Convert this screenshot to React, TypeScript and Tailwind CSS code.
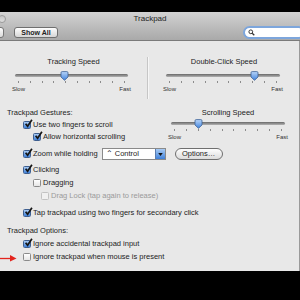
import React from "react";

const ticks = [0, 1, 2, 3, 4, 5, 6, 7, 8, 9];

function Thumb() {
  return (
    <svg viewBox="0 0 9 10" className="w-[9px] h-[10px]">
      <defs>
        <linearGradient id="tg" x1="0" y1="0" x2="0" y2="1">
          <stop offset="0" stopColor="#b9d6fa" />
          <stop offset="1" stopColor="#3f82dc" />
        </linearGradient>
      </defs>
      <path d="M1 1.8 Q1 0.6 2.2 0.6 H6.8 Q8 0.6 8 1.8 V6 L4.5 9.3 L1 6 Z" fill="url(#tg)" stroke="#3b5f94" strokeWidth="0.8" />
    </svg>
  );
}

function Slider({ pos, className }: { pos: number; className: string }) {
  return (
    <div className={"flex flex-col " + className}>
      <div className="relative h-[10px] flex items-center">
        <div className="w-full h-[3px] rounded-full bg-linear-to-b from-[#686868] to-[#b4b4b4]" />
        <div className="absolute top-[1px] -ml-[4.5px]" style={{ left: `${pos * 100}%` }}>
          <Thumb />
        </div>
      </div>
      <div className="h-[5px] flex justify-between px-[3px] pt-[1px]">
        {ticks.map(t => (
          <span key={t} className="w-px h-[2px] bg-[#8c8c8c]" />
        ))}
      </div>
      <div className="h-[8px] flex justify-between -mx-[3px] text-[6px] leading-[8px] text-[#333]">
        <span>Slow</span>
        <span>Fast</span>
      </div>
    </div>
  );
}

function Check({ checked, disabled }: { checked?: boolean; disabled?: boolean }) {
  const box = checked
    ? "bg-linear-to-b from-[#a8cbf4] to-[#3f80d8] border-[#3e5f90]"
    : disabled
    ? "bg-[#f0f0f0] border-[#c2c2c2]"
    : "bg-linear-to-b from-white to-[#e6e6e6] border-[#8a8a8a]";
  return (
    <span className={"relative w-[8px] h-[8px] rounded-[1.5px] border shrink-0 " + box}>
      {checked && (
        <svg viewBox="0 0 10 10" className="absolute -top-[3px] left-0 w-[9px] h-[9px]">
          <path d="M1.8 5.2 L4 8 L8.8 0.8" stroke="#151515" strokeWidth="1.9" fill="none" />
        </svg>
      )}
    </span>
  );
}

function Row({ label, checked, disabled, className }: { label: string; checked?: boolean; disabled?: boolean; className: string }) {
  return (
    <div className={"flex items-center h-[12px] gap-[2px] " + className}>
      <Check checked={checked} disabled={disabled} />
      <span className={disabled ? "text-[#9a9a9a]" : ""}>{label}</span>
    </div>
  );
}

export default function App() {
  return (
    <div className="w-[300px] h-[300px] bg-black flex flex-col overflow-hidden font-['Liberation_Sans',Arial,sans-serif] text-[#1d1d1d] text-[7.5px] leading-[10px]">
      <div className="h-[12px] shrink-0" />

      {/* title bar + toolbar */}
      <div className="h-[29px] shrink-0 bg-linear-to-b from-[#d2d2d2] to-[#a9a9a9] border-b border-[#7a7a7a] flex flex-col">
        <div className="h-[13px] grid grid-cols-[1fr_auto_1fr] items-center">
          <span className="w-[8px] h-[8px] -ml-[2px] mt-[1px] rounded-full bg-linear-to-b from-[#c4c4c4] to-[#dedede] border border-[#9a9a9a]" />
          <span className="text-[8px] text-[#222]">Trackpad</span>
          <span />
        </div>
        <div className="flex-1 flex items-center">
          <div className="w-[10px] h-[11px] -ml-[6px] rounded-[3px] border border-[#777] bg-linear-to-b from-[#fdfdfd] to-[#dadada]" />
          <div className="ml-[10px] w-[44px] h-[11px] rounded-[3px] border border-[#6f6f6f] bg-linear-to-b from-[#fdfdfd] to-[#d6d6d6] flex items-center justify-center text-[7px] font-bold text-[#222]">
            Show All
          </div>
          <div className="flex-1" />
          <div className="w-[62px] h-[13px] -mr-[5px] rounded-full border-2 border-[#7da6dc] bg-white flex items-center pl-[3px]">
            <svg viewBox="0 0 10 10" className="w-[7px] h-[7px]">
              <circle cx="4" cy="4" r="2.7" stroke="#333" strokeWidth="1.4" fill="none" />
              <path d="M6 6 L9 9" stroke="#333" strokeWidth="1.8" />
            </svg>
          </div>
        </div>
      </div>

      {/* content */}
      <div className="h-[230px] shrink-0 bg-[#e8e8e8] border-r border-[#9a9a9a] flex flex-col">
        {/* speed sliders */}
        <div className="h-[59px] flex pt-[16px]">
          <div className="w-[147px] flex flex-col items-center">
            <div className="h-[10px]">Tracking Speed</div>
            <Slider pos={0.44} className="w-[113px] mt-[3px] -ml-[4px]" />
          </div>
          <div className="w-[2px] h-[42px] bg-[#c6c6c6] border-r border-[#f6f6f6]" />
          <div className="flex-1 flex flex-col items-center">
            <div className="h-[10px]">Double-Click Speed</div>
            <Slider pos={0.78} className="w-[114px] mt-[3px] -ml-[2px]" />
          </div>
        </div>

        {/* gestures */}
        <div className="flex">
          <div className="w-[163px] flex flex-col pt-[7px]">
            <div className="h-[12px] pl-[7px] flex items-center">Trackpad Gestures:</div>
            <Row label="Use two fingers to scroll" checked className="pl-[23px]" />
            <Row label="Allow horizontal scrolling" checked className="pl-[33px]" />
          </div>
          <div className="flex flex-col items-center pt-[8px] pl-[8px]">
            <div className="h-[10px]">Scrolling Speed</div>
            <Slider pos={0.245} className="w-[114px]" />
          </div>
        </div>

        <div className="flex items-center h-[12px] mt-[5px] pl-[23px]">
          <Check checked />
          <span className="ml-[2px]">Zoom while holding</span>
          <div className="ml-[4px] w-[64px] h-[12px] flex border border-[#8a8a8a] bg-white">
            <span className="flex-1 pl-[3px] leading-[10px]">⌃ Control</span>
            <span className="w-[10px] bg-linear-to-b from-[#a8cbf4] to-[#3f80d8] border-l border-[#5a7db0] flex items-center justify-center">
              <svg viewBox="0 0 6 4" className="w-[5px] h-[3px]">
                <path d="M0 0 H6 L3 4 Z" fill="#111" />
              </svg>
            </span>
          </div>
          <div className="ml-[9px] w-[48px] h-[12px] rounded-full border border-[#6f6f6f] bg-linear-to-b from-[#fefefe] to-[#dcdcdc] flex items-center justify-center">
            Options…
          </div>
        </div>

        <Row label="Clicking" checked className="pl-[23px] mt-[4px]" />
        <Row label="Dragging" className="pl-[33px] mt-[1px]" />
        <Row label="Drag Lock (tap again to release)" disabled className="pl-[41px] mt-[1px]" />
        <Row label="Tap trackpad using two fingers for secondary click" checked className="pl-[23px] mt-[5px]" />

        <div className="h-[12px] pl-[7px] mt-[6px] flex items-center">Trackpad Options:</div>
        <Row label="Ignore accidental trackpad input" checked className="pl-[23px] mt-[1px]" />
        <div className="flex items-center h-[12px] mt-[1px]">
          <svg viewBox="0 0 17 8" className="w-[17px] h-[8px] mt-[2px]">
            <path d="M0 4.5 H12" stroke="#e3241d" strokeWidth="1.3" />
            <path d="M10 1 L16.5 4.5 L10 7.5 Z" fill="#e3241d" />
          </svg>
          <span className="ml-[6px]" />
          <Check />
          <span className="ml-[2px]">Ignore trackpad when mouse is present</span>
        </div>
      </div>
    </div>
  );
}
